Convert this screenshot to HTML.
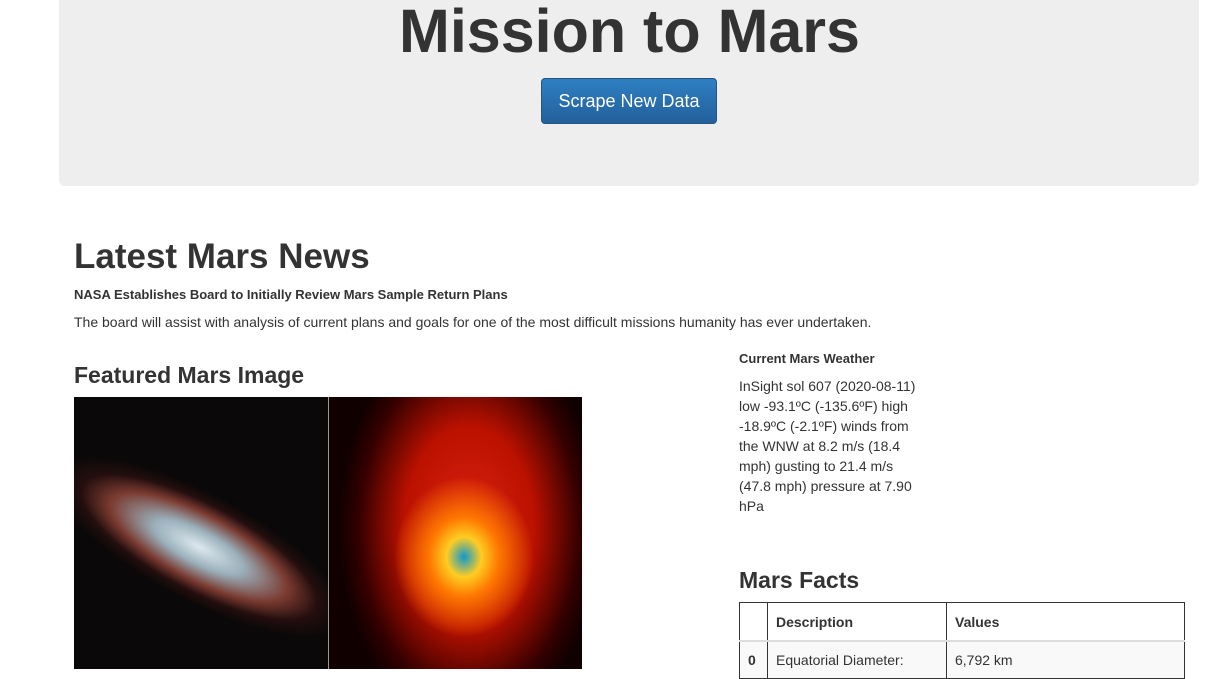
<!DOCTYPE html>
<html><head><style>
body{margin:0;width:1231px;height:669px;overflow:hidden;background:#fff;font-family:"Liberation Sans",sans-serif;color:#333;position:relative}
.jum{position:absolute;left:59px;top:-20px;width:1140px;height:206px;background:#eee;border-radius:6px}
h1{position:absolute;left:0;width:1259px;top:-4px;margin:0;text-align:center;font-size:61px;font-weight:bold;color:#333}
.btn{position:absolute;left:541px;top:78px;width:174px;height:44px;border:1px solid #245580;border-radius:4px;background:linear-gradient(#2f7fc2,#23609c);color:#fff;font-size:18px;line-height:44px;text-align:center}
.t{position:absolute;margin:0}
table{position:absolute;left:739px;top:602px;width:446px;border-collapse:collapse;font-size:14px}
td,th{border:1px solid #333;padding:0 8px;text-align:left}
th{height:37px;border-bottom:2px solid #ddd}
tr.r td{background:#f9f9f9;height:36px;border-top:none}
</style></head><body>
<div class="jum"></div>
<h1>Mission to Mars</h1>
<div class="btn">Scrape New Data</div>
<div class="t" style="left:74px;top:237px;font-size:35px;font-weight:bold">Latest Mars News</div>
<div class="t" style="left:74px;top:287px;font-size:13px;font-weight:bold">NASA Establishes Board to Initially Review Mars Sample Return Plans</div>
<div class="t" style="left:74px;top:314px;font-size:14px">The board will assist with analysis of current plans and goals for one of the most difficult missions humanity has ever undertaken.</div>
<div class="t" style="left:74px;top:362px;font-size:23px;font-weight:bold">Featured Mars Image</div>
<div class="t" style="left:74px;top:397px;width:254px;height:272px;overflow:hidden;background:#0a0808">
<div style="position:absolute;left:-40px;top:60px;width:330px;height:180px;transform:rotate(28deg);background:radial-gradient(ellipse 50% 30% at 50% 50%,#dde8ee 0%,#9ab0bb 30%,#7a3a30 60%,rgba(60,20,20,.5) 80%,rgba(10,8,8,0) 100%)"></div></div>
<div class="t" style="left:328px;top:397px;width:1px;height:272px;background:#999"></div>
<div class="t" style="left:329px;top:397px;width:253px;height:272px;background:radial-gradient(ellipse 70px 80px at 135px 160px,#19c 0%,#fc2 25%,#f70 50%,rgba(200,30,0,0) 100%),radial-gradient(ellipse 130px 200px at 140px 130px,#d21 0%,#b10 50%,#300 85%,#100 100%)"></div>
<div class="t" style="left:739px;top:351px;font-size:13px;font-weight:bold">Current Mars Weather</div>
<div class="t" style="left:739px;top:376px;width:180px;font-size:14px;line-height:20px">InSight sol 607 (2020-08-11) low -93.1ºC (-135.6ºF) high -18.9ºC (-2.1ºF) winds from the WNW at 8.2 m/s (18.4 mph) gusting to 21.4 m/s (47.8 mph) pressure at 7.90 hPa</div>
<div class="t" style="left:739px;top:567px;font-size:23px;font-weight:bold">Mars Facts</div>
<table><tr><th style="width:11px"></th><th style="width:162px">Description</th><th>Values</th></tr>
<tr class="r"><td style="font-weight:bold">0</td><td>Equatorial Diameter:</td><td>6,792 km</td></tr></table>
</body></html>
